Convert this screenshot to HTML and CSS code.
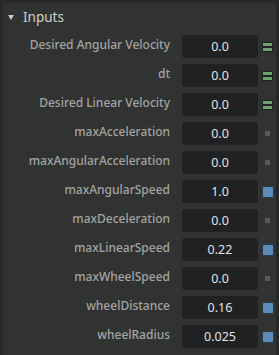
FILE: index.html
```html
<!DOCTYPE html>
<html>
<head>
<meta charset="utf-8">
<link rel="stylesheet" href="styles.css">
</head>
<body>
<div class="panel">
  <div class="section-header">
    <span class="arrow"></span>
    <span class="section-title">Inputs</span>
  </div>
  <div class="rows">
    <div class="row"><span class="label">Desired Angular Velocity</span><span class="value">0.0</span><span class="port port-green"></span></div>
    <div class="row"><span class="label">dt</span><span class="value">0.0</span><span class="port port-green"></span></div>
    <div class="row"><span class="label">Desired Linear Velocity</span><span class="value">0.0</span><span class="port port-green"></span></div>
    <div class="row"><span class="label">maxAcceleration</span><span class="value">0.0</span><span class="port port-dot"></span></div>
    <div class="row"><span class="label">maxAngularAcceleration</span><span class="value">0.0</span><span class="port port-dot"></span></div>
    <div class="row"><span class="label">maxAngularSpeed</span><span class="value">1.0</span><span class="port port-blue"></span></div>
    <div class="row"><span class="label">maxDeceleration</span><span class="value">0.0</span><span class="port port-dot"></span></div>
    <div class="row"><span class="label">maxLinearSpeed</span><span class="value">0.22</span><span class="port port-blue"></span></div>
    <div class="row"><span class="label">maxWheelSpeed</span><span class="value">0.0</span><span class="port port-dot"></span></div>
    <div class="row"><span class="label">wheelDistance</span><span class="value">0.16</span><span class="port port-blue"></span></div>
    <div class="row"><span class="label">wheelRadius</span><span class="value">0.025</span><span class="port port-blue"></span></div>
  </div>
</div>
</body>
</html>
```
FILE: styles.css
```css
html, body {
  margin: 0;
  padding: 0;
  background: #272828;
}
body {
  width: 279px;
  height: 355px;
  overflow: hidden;
  font-family: "Noto Sans", "Open Sans", sans-serif;
}
.panel {
  margin: 3px 3px 0 3px;
  height: 352px;
  background: #313332;
}
.section-header {
  height: 29px;
  display: flex;
  align-items: center;
}
.arrow {
  width: 0;
  height: 0;
  margin-left: 5px;
  border-left: 3.5px solid transparent;
  border-right: 3.5px solid transparent;
  border-top: 5px solid #c8c8c8;
}
.section-title {
  margin-left: 9px;
  color: #cfcfcf;
  font-size: 13.5px;
  margin-top: -1px;
}
.rows {
  display: flex;
  flex-direction: column;
}
.row {
  height: 23px;
  padding: 3px 0;
  display: grid;
  grid-template-columns: 179px 76px 16px;
  align-items: center;
}
.label {
  grid-column: 1;
  justify-self: end;
  padding-right: 12px;
  margin-bottom: 4px;
  color: #a3a3a3;
  font-size: 12px;
  font-weight: 500;
  white-space: nowrap;
}
.value {
  grid-column: 2;
  height: 23px;
  line-height: 24px;
  background: #202122;
  border-radius: 3px;
  color: #e2e2e2;
  font-size: 12.5px;
  text-align: center;
}
.port {
  grid-column: 3;
  justify-self: end;
  box-sizing: border-box;
}
.port-green {
  width: 11px;
  height: 10px;
  margin-right: 1px;
  background: #1e2220;
  border-radius: 2px;
  background-image: linear-gradient(#6aa46c, #6aa46c), linear-gradient(#6aa46c, #6aa46c);
  background-repeat: no-repeat;
  background-size: 9px 3px, 9px 3px;
  background-position: 1px 1px, 1px 6px;
}
.port-blue {
  width: 12px;
  height: 12px;
  background: #5b8cb8;
  border: 1px solid #2a3a48;
  border-radius: 2px;
}
.port-dot {
  width: 5px;
  height: 5px;
  margin-right: 4px;
  background: #575959;
}
```
